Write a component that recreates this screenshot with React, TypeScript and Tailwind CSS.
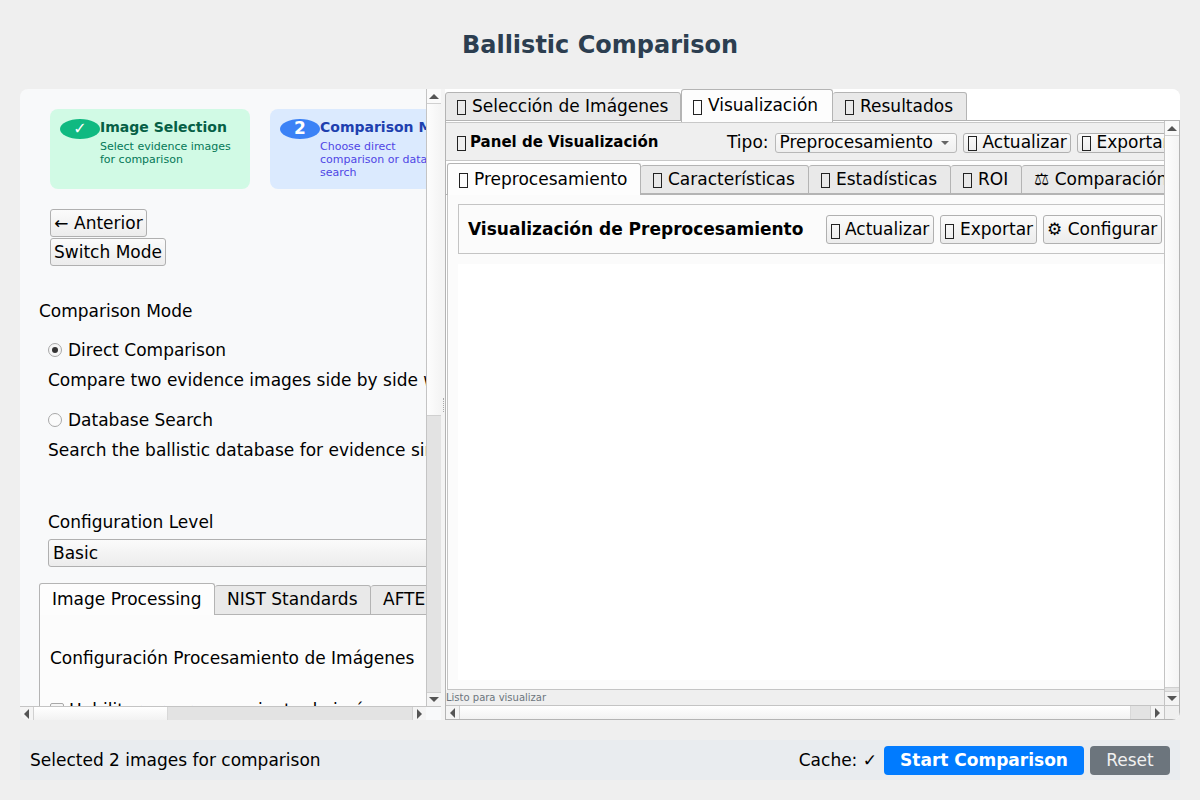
import React from 'react';

const Up = () => <div className="w-0 h-0 border-x-[5px] border-x-transparent border-b-[5px] border-b-[#555]" />;
const Down = () => <div className="w-0 h-0 border-x-[5px] border-x-transparent border-t-[5px] border-t-[#555]" />;
const Left = () => <div className="w-0 h-0 border-y-[5px] border-y-transparent border-r-[5px] border-r-[#555]" />;
const Right = () => <div className="w-0 h-0 border-y-[5px] border-y-transparent border-l-[5px] border-l-[#555]" />;

// missing-glyph box, the screenshot's emoji have no font
const Tofu: React.FC<{ className?: string }> = ({ className = 'mr-[6px]' }) => (
  <span aria-hidden="true" className={`inline-block shrink-0 w-[9px] h-[15px] mt-[2px] border border-[#222] ${className}`} />
);

const VScroll: React.FC<{ thumb: number }> = ({ thumb }) => (
  <div className="w-[15px] shrink-0 flex flex-col bg-[#e3e3e3] border-l border-[#c4c4c4]">
    <div className="h-[15px] flex items-center justify-center bg-[#fafafa] border-b border-[#d0d0d0]"><Up /></div>
    <div className="flex-1 flex flex-col">
      <div className="bg-gradient-to-r from-[#fdfdfd] to-[#f4f4f4] border-b border-[#d0d0d0]" style={{ height: thumb }} />
    </div>
    <div className="h-[14px] flex items-center justify-center bg-[#f4f4f4] border-t border-[#d0d0d0]"><Down /></div>
  </div>
);

const HScroll: React.FC<{ thumb: number; after: number }> = ({ thumb, after }) => (
  <div className="h-[14px] flex flex-1 min-w-0 bg-[#e3e3e3] border-t border-[#c4c4c4]">
    <div className="w-[14px] flex items-center justify-center bg-[#f4f4f4] border-r border-[#d0d0d0]"><Left /></div>
    <div className="flex-1 flex min-w-0">
      <div className="bg-gradient-to-b from-[#ffffff] to-[#f2f2f2] border-r border-[#d8d8d8]" style={{ width: thumb }} />
      <div className="bg-[#e3e3e3]" style={{ width: after }} />
    </div>
    <div className="w-[14px] flex items-center justify-center bg-[#f4f4f4] border-l border-[#d0d0d0]"><Right /></div>
  </div>
);

const QButton: React.FC<{ children: React.ReactNode; className?: string }> = ({ children, className = '' }) => (
  <div className={`shrink-0 whitespace-nowrap rounded-[3px] border border-[#b0b0b0] bg-gradient-to-b from-[#fbfbfb] to-[#ececec] text-black flex items-center ${className}`}>
    {children}
  </div>
);

const TabOn: React.FC<{ className: string; children: React.ReactNode }> = ({ className, children }) => (
  <div className={`shrink-0 z-10 rounded-t-[3px] border border-b-0 border-[#b4b4b4] bg-[#fdfdfd] flex items-center whitespace-nowrap ${className}`}>
    {children}
  </div>
);

const TabOff: React.FC<{ className: string; children: React.ReactNode }> = ({ className, children }) => (
  <div className={`shrink-0 rounded-t-[3px] border border-l-0 border-[#b4b4b4] bg-[#e9e9e9] flex items-center pl-3 whitespace-nowrap overflow-hidden ${className}`}>
    {children}
  </div>
);

const App: React.FC = () => {
  return (
    <div className="w-[1200px] h-[800px] overflow-hidden bg-[#efefef] flex flex-col text-[17px] text-black font-['DejaVu_Sans',sans-serif]">
      <h1 className="h-[89px] shrink-0 flex items-center justify-center text-2xl font-bold text-[#2c3e50]">Ballistic Comparison</h1>

      <div className="mx-5 h-[631px] shrink-0 flex rounded-lg overflow-hidden bg-[#f8f9fa]">
        {/* Left pane */}
        <div className="w-[421px] shrink-0 flex flex-col">
          <div className="flex-1 flex min-h-0">
            <div className="flex-1 min-w-0 overflow-hidden whitespace-nowrap">
              <div className="flex gap-5 pl-[30px] pt-5">
                <div className="w-[200px] h-20 shrink-0 rounded-lg bg-[#d1fae5] flex pl-[10px] pt-[10px] whitespace-normal">
                  <div className="w-10 h-5 shrink-0 rounded-[50%] bg-[#10b981] text-white text-base flex items-center justify-center">✓</div>
                  <div>
                    <div className="text-sm font-bold leading-4 text-[#065f46]">Image Selection</div>
                    <div className="text-[11px] leading-[13px] mt-[5px] text-[#047857] w-[135px]">Select evidence images for comparison</div>
                  </div>
                </div>
                <div className="w-[200px] h-20 shrink-0 rounded-lg bg-[#dbeafe] flex pl-[10px] pt-[10px] whitespace-normal">
                  <div className="w-10 h-5 shrink-0 rounded-[50%] bg-[#3b82f6] text-white text-[17px] font-bold flex items-center justify-center">2</div>
                  <div>
                    <div className="text-sm font-bold leading-4 text-[#1e40af] whitespace-nowrap">Comparison Mode</div>
                    <div className="text-[11px] leading-[13px] mt-[5px] text-[#4f46e5] w-[140px]">Choose direct comparison or database search</div>
                  </div>
                </div>
              </div>

              <div className="ml-[30px] mt-5 flex flex-col items-start gap-px">
                <QButton className="h-[28px] w-[97px] justify-center pt-px">← Anterior</QButton>
                <QButton className="h-[28px] w-[116px] justify-center pt-px">Switch Mode</QButton>
              </div>

              <div className="ml-[19px] mt-[35px] leading-5">Comparison Mode</div>

              <div className="ml-7 mt-[19px] flex items-center gap-[6px] leading-5">
                <div className="w-[14px] h-[14px] rounded-full border border-[#a8a8a8] bg-[#f6f6f6] flex items-center justify-center">
                  <div className="w-[6px] h-[6px] rounded-full bg-[#333]" />
                </div>
                Direct Comparison
              </div>
              <div className="ml-7 mt-[10px] leading-5">Compare two evidence images side by side with detailed analysis</div>

              <div className="ml-7 mt-[20px] flex items-center gap-[6px] leading-5">
                <div className="w-[14px] h-[14px] rounded-full border border-[#a8a8a8] bg-[#fbfbfb]" />
                Database Search
              </div>
              <div className="ml-7 mt-[10px] leading-5">Search the ballistic database for evidence similar to your sample</div>

              <div className="ml-7 mt-[52px] leading-5">Configuration Level</div>
              <div className="ml-7 mt-[7px] w-[420px] h-[28px] rounded-[3px] border border-[#b0b0b0] bg-gradient-to-b from-[#fbfbfb] to-[#ececec] flex items-center pl-1 pt-px">Basic</div>

              <div className="ml-[19px] mt-[16px] w-[500px] flex items-start h-[32px] border-b border-[#b4b4b4]">
                <TabOn className="w-[176px] h-[32px] pl-3">Image Processing</TabOn>
                <TabOff className="w-[156px] h-[30px] mt-[2px]">NIST Standards</TabOff>
                <TabOff className="w-[160px] h-[30px] mt-[2px]">AFTE Conclusions</TabOff>
              </div>
              <div className="ml-[19px] border-l border-[#b4b4b4] bg-[#fcfcfc] h-[200px] pl-[10px]">
                <div className="pt-[33px] leading-5">Configuración Procesamiento de Imágenes</div>
                <div className="mt-[32px] flex items-center gap-[5px] leading-5">
                  <div className="w-[14px] h-[14px] border border-[#a8a8a8] bg-[#f6f6f6] rounded-[2px]" />
                  Habilitar preprocesamiento de imágenes
                </div>
              </div>
            </div>
            <VScroll thumb={312} />
          </div>
          <div className="flex">
            <HScroll thumb={134} after={244} />
            <div className="w-[15px] shrink-0 border-t border-[#c4c4c4] bg-[#f8f9fa]" />
          </div>
        </div>

        {/* Splitter */}
        <div className="w-1 shrink-0 flex items-center justify-center bg-[#f4f4f4]">
          <div className="w-px h-[14px] border-l border-dotted border-[#aaa]" />
        </div>

        {/* Right pane */}
        <div className="flex-1 min-w-0 flex flex-col bg-white">
          <div className="flex items-start h-8 shrink-0 pt-[3px] -mb-px">
            <div className="w-[236px] h-[29px] shrink-0 rounded-t-[3px] border border-[#b4b4b4] bg-[#e9e9e9] flex items-center pl-[11px] whitespace-nowrap"><Tofu />Selección de Imágenes</div>
            <TabOn className="w-[152px] h-[33px] -mt-[3px] pl-[11px]"><Tofu />Visualización</TabOn>
            <TabOff className="w-[134px] h-[29px]"><Tofu />Resultados</TabOff>
          </div>

          <div className="flex-1 min-h-0 flex flex-col border border-[#b4b4b4]">
            <div className="flex-1 min-h-0 flex">
              <div className="flex-1 min-w-0 flex flex-col overflow-hidden whitespace-nowrap">
                <div className="h-[39px] shrink-0 flex items-center bg-[#efefef] border-y border-[#c8c8c8] pl-[11px] mt-px pt-[2px]">
                  <span className="font-bold text-[15px] w-[270px] shrink-0 flex items-center"><Tofu className="mr-[4px]" />Panel de Visualización</span>
                  <span>Tipo:</span>
                  <div className="ml-[6px] w-[182px] h-[20px] shrink-0 rounded-[3px] border border-[#b8b8b8] bg-gradient-to-b from-[#fbfbfb] to-[#efefef] flex items-center pl-1 pr-[7px] justify-between">
                    Preprocesamiento
                    <div className="w-0 h-0 border-x-[4px] border-x-transparent border-t-[4px] border-t-[#666]" />
                  </div>
                  <QButton className="ml-[6px] h-[20px] w-[108px] pl-1"><Tofu />Actualizar</QButton>
                  <QButton className="ml-[6px] h-[20px] w-[97px] pl-1"><Tofu />Exportar</QButton>
                </div>

                <div className="flex items-start h-[32px] mt-[2px] shrink-0 bg-[#fcfcfc] border-b border-[#b4b4b4] pl-px">
                  <TabOn className="w-[194px] h-[32px] pl-[11px]"><Tofu />Preprocesamiento</TabOn>
                  <TabOff className="w-[168px] h-[29px] mt-[2px]"><Tofu />Características</TabOff>
                  <TabOff className="w-[142px] h-[29px] mt-[2px]"><Tofu />Estadísticas</TabOff>
                  <TabOff className="w-[71px] h-[29px] mt-[2px]"><Tofu />ROI</TabOff>
                  <TabOff className="w-[160px] h-[29px] mt-[2px]">⚖ Comparación</TabOff>
                </div>

                <div className="flex-1 min-h-0 bg-[#fbfbfb] pl-[10px] pt-[9px] border-l border-b border-[#c4c4c4] ml-px flex flex-col">
                  <div className="h-[50px] shrink-0 border border-r-0 border-[#c4c4c4] flex items-center pl-[9px] pt-[2px]">
                    <span className="font-bold text-[17px] w-[358px] shrink-0">Visualización de Preprocesamiento</span>
                    <QButton className="h-[29px] w-[108px] pl-1 -mt-[2px] pt-[2px]"><Tofu className="mr-[5px]" />Actualizar</QButton>
                    <QButton className="ml-[6px] h-[29px] w-[97px] pl-1 -mt-[2px] pt-[2px]"><Tofu />Exportar</QButton>
                    <QButton className="ml-[6px] h-[29px] w-[119px] pl-[3px] -mt-[2px] pt-[2px]">⚙ Configurar</QButton>
                  </div>
                  <div className="mt-[10px] h-[416px] bg-white" />
                </div>
                <div className="h-[15px] shrink-0 flex items-center bg-[#efefef] text-[10px] text-[#6c757d] leading-none">Listo para visualizar</div>
              </div>
              <VScroll thumb={552} />
            </div>
            <div className="flex shrink-0">
              <HScroll thumb={671} after={0} />
              <div className="w-[15px] shrink-0 border-t border-l border-[#c4c4c4] bg-[#efefef]" />
            </div>
          </div>
        </div>
      </div>

      {/* Footer */}
      <div className="mx-5 mt-5 h-10 shrink-0 bg-[#e9ecef] flex items-center px-[10px]">
        <span className="pt-[2px]">Selected 2 images for comparison</span>
        <span className="ml-auto pt-[2px]">Cache: ✓</span>
        <div className="ml-[7px] w-[200px] h-[29px] rounded-[4px] bg-[#007bff] text-white font-bold flex items-center justify-center pt-px">Start Comparison</div>
        <div className="ml-[6px] w-20 h-[29px] rounded-[4px] bg-[#6c757d] text-[#f0f0f0] flex items-center justify-center pt-px">Reset</div>
      </div>
    </div>
  );
};

export default App;
